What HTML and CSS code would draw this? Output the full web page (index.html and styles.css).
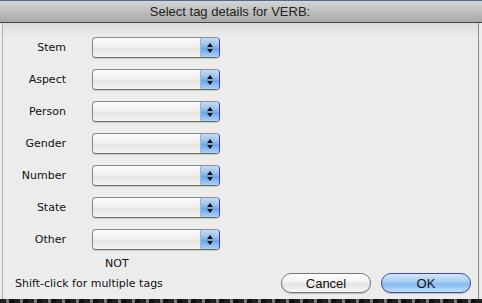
FILE: index.html
```html
<!DOCTYPE html>
<html lang="en">
<head>
    <meta charset="UTF-8">
    <title>Select tag details</title>
    <link rel="stylesheet" href="styles.css">
</head>
<body>
    <div class="sheet">
        <div class="titlebar">Select tag details for VERB:</div>
        <div class="panel">
            <div class="fields">
                <label>Stem</label><div class="popup"><span class="arrows"><i class="up"></i><i class="down"></i></span></div>
                <label>Aspect</label><div class="popup"><span class="arrows"><i class="up"></i><i class="down"></i></span></div>
                <label>Person</label><div class="popup"><span class="arrows"><i class="up"></i><i class="down"></i></span></div>
                <label>Gender</label><div class="popup"><span class="arrows"><i class="up"></i><i class="down"></i></span></div>
                <label>Number</label><div class="popup"><span class="arrows"><i class="up"></i><i class="down"></i></span></div>
                <label>State</label><div class="popup"><span class="arrows"><i class="up"></i><i class="down"></i></span></div>
                <label>Other</label><div class="popup"><span class="arrows"><i class="up"></i><i class="down"></i></span></div>
            </div>
            <div class="not">NOT</div>
            <div class="footer">
                <span class="hint">Shift-click for multiple tags</span>
                <div class="buttons">
                    <button class="btn">Cancel</button>
                    <button class="btn default">OK</button>
                </div>
            </div>
        </div>
        <div class="desk"></div>
    </div>
</body>
</html>
```

FILE: styles.css
```css
* { margin: 0; padding: 0; box-sizing: border-box; }
body {
    width: 482px;
    height: 303px;
    overflow: hidden;
    background: #ececec;
    font-family: "DejaVu Sans", Verdana, sans-serif;
    color: #111;
}
.sheet {
    display: flex;
    flex-direction: column;
    height: 303px;
    border-top: 1px solid #4d6c9c;
}
.titlebar {
    height: 22px;
    line-height: 21px;
    text-align: center;
    padding-right: 22px;
    font-family: "Liberation Sans", Arial, sans-serif;
    font-size: 13px;
    color: #222;
    background: linear-gradient(#d6d6d6, #b9b9b9 60%, #a9a9a9);
    border-bottom: 1px solid #444;
}
.panel {
    flex: 1;
    margin-left: 2px;
    margin-right: 3px;
    border-left: 1px solid #b0b0b0;
    border-right: 1px solid #8a8a8a;
    background: linear-gradient(#dcdcdc, #ececec 14px);
    padding: 14px 0 0 11px;
    display: flex;
    flex-direction: column;
}
.fields {
    display: grid;
    grid-template-columns: 52px 128px;
    column-gap: 26px;
    row-gap: 11px;
    align-items: center;
}
.fields label {
    text-align: right;
    font-size: 11px;
    line-height: 21px;
    white-space: nowrap;
}
.popup {
    position: relative;
    height: 21px;
    border: 1px solid #8c8c8c;
    border-bottom-color: #6e6e6e;
    border-right-color: #3c3cb0;
    border-radius: 4px;
    background: linear-gradient(#fbfbfb, #f0f0f0 45%, #e4e4e4 55%, #f6f6f6);
    box-shadow: 0 1px 1px rgba(0, 0, 0, 0.15);
    overflow: hidden;
}
.arrows {
    position: absolute;
    right: 0;
    top: 0;
    bottom: 0;
    width: 19px;
    border-left: 1px solid #9bb4d6;
    background: linear-gradient(#c3dcf7, #8fbaea 45%, #6ea6e4 55%, #a9d2fb);
    display: flex;
    flex-direction: column;
    align-items: center;
    justify-content: center;
    gap: 2px;
}
.arrows i {
    display: block;
    width: 0;
    height: 0;
    border-left: 3px solid transparent;
    border-right: 3px solid transparent;
}
.arrows .up { border-bottom: 4px solid #111; }
.arrows .down { border-top: 4px solid #111; }
.not {
    font-size: 11px;
    margin: 7px 0 0 91px;
    line-height: 13px;
}
.footer {
    display: flex;
    justify-content: space-between;
    align-items: center;
    margin-top: 3px;
}
.hint {
    font-size: 11px;
    margin-left: 1px;
}
.buttons {
    display: flex;
    gap: 10px;
    margin-right: 7px;
}
.btn {
    width: 90px;
    height: 20px;
    border-radius: 10px;
    border: 1px solid #777;
    font-family: "Liberation Sans", Arial, sans-serif;
    font-size: 13px;
    color: #111;
    background: linear-gradient(#fefefe, #f2f2f2 45%, #e2e2e2 55%, #f8f8f8);
    box-shadow: 0 1px 1px rgba(0, 0, 0, 0.2);
}
.btn.default {
    border-color: #3f4aa6;
    background: linear-gradient(#d3e7fb, #a6cdf3 45%, #82b8ef 55%, #bfe1fd);
}
.desk {
    height: 4px;
    background: repeating-linear-gradient(90deg, #222 0 6px, #777 6px 9px, #111 9px 14px);
}
```
